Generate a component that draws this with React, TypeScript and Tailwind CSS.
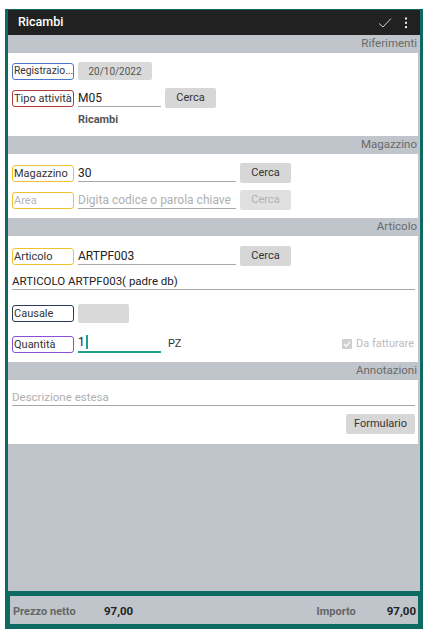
import React from "react";

const F = { fontFamily: "Roboto, 'Noto Sans', Arial, sans-serif" };

function Header({ title }: { title: string }) {
  return (
    <div className="h-[18px] flex items-center justify-end pr-[3px] text-[11.5px] text-[#6a6a6a] bg-[#bfc5ca]">
      {title}
    </div>
  );
}

function Label({ text, color, muted, small }: { text: string; color: string; muted?: boolean; small?: boolean }) {
  return (
    <div
      className={`w-[62px] h-[17px] shrink-0 border rounded-[3px] flex items-center pl-[1px] leading-none overflow-hidden whitespace-nowrap ${small ? "text-[10.3px]" : "text-[11px]"} ${muted ? "text-[#b5b5b5]" : "text-[#333]"}`}
      style={{ borderColor: color }}
    >
      {text}
    </div>
  );
}

function Input({ value, placeholder, w, active }: { value?: string; placeholder?: string; w: number; active?: boolean }) {
  return (
    <div
      className={`h-[18px] flex items-end pb-[2px] text-[12px] leading-none ${active ? "border-b-2 border-[#1f9e8c]" : "border-b border-[#a8a8a8]"}`}
      style={{ width: w }}
    >
      {value !== undefined ? (
        <span className="text-[#222] flex items-center">
          {value}
          {active && <span className="inline-block w-[2px] h-[14px] bg-[#1f9e8c] ml-[1px]" />}
        </span>
      ) : (
        <span className="text-[#b0b0b0]">{placeholder}</span>
      )}
    </div>
  );
}

function Btn({ text, disabled, w = 51 }: { text: string; disabled?: boolean; w?: number }) {
  return (
    <div
      className={`h-[20px] shrink-0 rounded-[2px] flex items-center justify-center text-[11px] ${disabled ? "text-[#b0b0b0] bg-[#e0e0e0]" : "text-[#333] bg-[#d7d7d7]"}`}
      style={{ width: w }}
    >
      {text}
    </div>
  );
}

export default function App() {
  return (
    <div className="w-[433px] h-[638px] bg-white overflow-hidden" style={F}>
      <div className="pt-[9px] pl-[5px]">
        <div className="w-[418px] h-[582px] border-x-[3px] border-t border-[#0e6b62] flex flex-col">
          {/* top bar */}
          <div className="h-[25px] shrink-0 bg-[#212121] flex items-center pl-[10px] pr-[12px]">
            <span className="text-white text-[12.5px] font-medium">Ricambi</span>
            <div className="ml-auto flex items-center gap-[12px]">
              <svg width="14" height="12" viewBox="0 0 14 12">
                <path d="M1 6.5 L5 10 L13 1.5" fill="none" stroke="#cfcfcf" strokeWidth="1" />
              </svg>
              <svg width="4" height="12" viewBox="0 0 4 12">
                <rect x="1" y="0.5" width="2" height="2" fill="#eee" />
                <rect x="1" y="4.8" width="2" height="2" fill="#eee" />
                <rect x="1" y="9.1" width="2" height="2" fill="#eee" />
              </svg>
            </div>
          </div>
          <div className="flex-1 bg-[#bfc5ca] flex flex-col">
            {/* Riferimenti */}
            <Header title="Riferimenti" />
            <div className="bg-white mr-[2px] h-[83px] pl-[4px] pt-[9px]">
              <div className="h-[18px] flex items-center gap-[4px]">
                <Label text="Registrazio..." color="#4a78c8" small />
                <div className="w-[74px] h-[18px] bg-[#d9d9d9] rounded-[2px] flex items-center justify-center text-[10px] text-[#555]">
                  20/10/2022
                </div>
              </div>
              <div className="h-[20px] mt-[8px] flex items-center gap-[4px]">
                <Label text="Tipo attività" color="#b23a3a" />
                <Input value="M05" w={83} />
                <Btn text="Cerca" />
              </div>
              <div className="h-[18px] mt-[3px] pl-[66px] flex items-center text-[11px] font-bold text-[#555]">
                Ricambi
              </div>
            </div>
            {/* Magazzino */}
            <Header title="Magazzino" />
            <div className="bg-white mr-[2px] h-[64px] pl-[4px] pt-[9px]">
              <div className="h-[20px] flex items-center gap-[4px]">
                <Label text="Magazzino" color="#f2c12e" />
                <Input value="30" w={158} />
                <Btn text="Cerca" />
              </div>
              <div className="h-[20px] mt-[7px] flex items-center gap-[4px]">
                <Label text="Area" color="#f2c12e" muted />
                <Input placeholder="Digita codice o parola chiave" w={158} />
                <Btn text="Cerca" disabled />
              </div>
            </div>
            {/* Articolo */}
            <Header title="Articolo" />
            <div className="bg-white mr-[2px] h-[126px] pl-[4px] pt-[10px]">
              <div className="h-[20px] flex items-center gap-[4px]">
                <Label text="Articolo" color="#f2c12e" />
                <Input value="ARTPF003" w={158} />
                <Btn text="Cerca" />
              </div>
              <div className="mt-[6px] w-[403px] h-[18px] border-b border-[#a8a8a8] flex items-end pb-[2px] text-[11.5px] text-[#222] leading-none">
                ARTICOLO ARTPF003( padre db)
              </div>
              <div className="h-[19px] mt-[14px] flex items-center gap-[4px]">
                <Label text="Causale" color="#2c3a5c" />
                <div className="w-[51px] h-[19px] bg-[#d9d9d9] rounded-[2px]" />
              </div>
              <div className="h-[18px] mt-[12px] flex items-center gap-[4px]">
                <Label text="Quantità" color="#8a4fd6" />
                <Input value="1" w={83} active />
                <span className="ml-[3px] text-[11px] text-[#333]">PZ</span>
                <div className="ml-auto mr-[4px] flex items-center gap-[4px]">
                  <div className="w-[10px] h-[10px] rounded-[1px] bg-[#cfcfcf] flex items-center justify-center">
                    <svg width="8" height="8" viewBox="0 0 8 8">
                      <path d="M1 4 L3.2 6.2 L7 1.8" fill="none" stroke="white" strokeWidth="1.3" />
                    </svg>
                  </div>
                  <span className="text-[11px] text-[#bcbcbc]">Da fatturare</span>
                </div>
              </div>
            </div>
            {/* Annotazioni */}
            <Header title="Annotazioni" />
            <div className="bg-white mr-[2px] h-[64px] pl-[4px] pt-[8px]">
              <div className="w-[403px] h-[18px] border-b border-[#a8a8a8] flex items-end pb-[2px] text-[11.5px] text-[#b0b0b0] leading-none">
                Descrizione estesa
              </div>
              <div className="mt-[8px] flex justify-end pr-[3px]">
                <Btn text="Formulario" w={69} />
              </div>
            </div>
          </div>
        </div>
        {/* footer */}
        <div className="w-[418px] h-[38px] border-[5px] border-[#0e6b62] bg-[#bfc5ca] flex items-center pt-[4px] pl-[3px] pr-[2px] text-[11px] font-bold">
          <span className="text-[#666] w-[91px]">Prezzo netto</span>
          <span className="text-[#222] text-[11.5px]">97,00</span>
          <span className="text-[#666] ml-auto mr-[31px]">Importo</span>
          <span className="text-[#222] text-[11.5px]">97,00</span>
        </div>
      </div>
    </div>
  );
}
